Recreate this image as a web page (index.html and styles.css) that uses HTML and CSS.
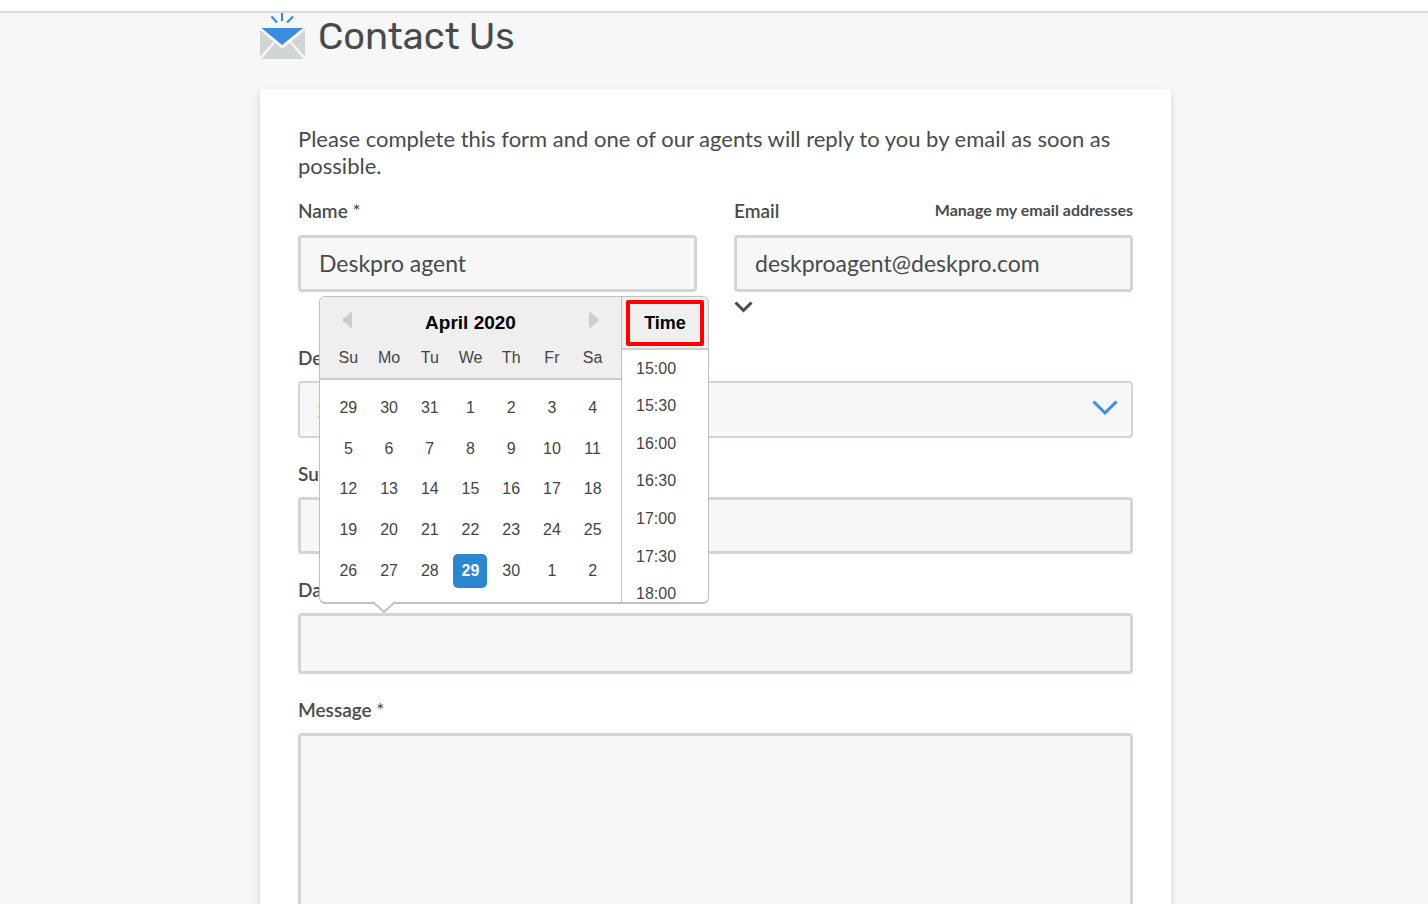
FILE: index.html
```html
<!DOCTYPE html>
<html lang="en">
<head>
<meta charset="utf-8">
<title>Contact Us</title>
<link rel="stylesheet" href="styles.css">
</head>
<body>
<div class="page">
  <div class="topbar"></div>
  <main class="container">
    <header class="heading">
      <svg class="heading-icon" width="45" height="46" viewBox="0 0 45 46" aria-hidden="true">
        <path d="M0 17L13.500 28.500L0 43.500ZM45 17L31.500 28.500L45 43.500ZM1.500 46L15 30L22 35.500L30 30L43.500 46Z" fill="#d1d5d5"/>
        <path d="M1.500 15H43L22 32Z" fill="#3a8dde"/>
        <path d="M22 0V8M11.500 3.500L17 9.500M33 3.500L27 9.500" fill="none" stroke="#3a8dde" stroke-width="2.200"/>
      </svg>
      <h1 class="title">Contact Us</h1>
    </header>
    <form class="card">
      <p class="intro">Please complete this form and one of our agents will reply to you by email as soon as possible.</p>
      <div class="row">
        <div class="field">
          <div class="label-row"><label class="label" for="name">Name <span class="star">*</span></label></div>
          <input class="input" id="name" type="text" value="Deskpro agent">
        </div>
        <div class="field">
          <div class="label-row">
            <label class="label" for="email">Email</label>
            <a class="manage" href="#">Manage my email addresses</a>
          </div>
          <input class="input" id="email" type="email" value="deskproagent@deskpro.com">
          <button class="more" type="button" aria-label="More email options">
            <svg width="19" height="12" viewBox="0 0 19 12"><path d="M1.500 1.500L9.500 9.500L17.500 1.500" fill="none" stroke="#484b4c" stroke-width="3"/></svg>
          </button>
        </div>
      </div>
      <div class="field department">
        <div class="label-row"><label class="label" for="department">Department <span class="star">*</span></label></div>
        <div class="control">
          <select class="input select" id="department"><option>Select</option></select>
          <svg class="select-arrow" width="26" height="16" viewBox="0 0 26 16" aria-hidden="true"><path d="M1.500 1.500L13 13L24.500 1.500" fill="none" stroke="#3a8dde" stroke-width="3"/></svg>
        </div>
      </div>
      <div class="field">
        <div class="label-row"><label class="label" for="subject">Subject <span class="star">*</span></label></div>
        <input class="input" id="subject" type="text">
      </div>
      <div class="field">
        <div class="label-row"><label class="label" for="date">Date</label></div>
        <div class="control">
          <input class="input date-input" id="date" type="text">
          <div class="picker">
            <div class="calendar">
              <div class="month">
                <button class="nav" type="button" aria-label="Previous month"><svg width="10" height="18" viewBox="0 0 10 18"><path d="M10 0V18L0 9Z" fill="#ccc"/></svg></button>
                <span>April 2020</span>
                <button class="nav" type="button" aria-label="Next month"><svg width="10" height="18" viewBox="0 0 10 18"><path d="M0 0V18L10 9Z" fill="#ccc"/></svg></button>
              </div>
              <table class="days">
                <thead><tr><th>Su</th><th>Mo</th><th>Tu</th><th>We</th><th>Th</th><th>Fr</th><th>Sa</th></tr></thead>
                <tbody>
                  <tr><td>29</td><td>30</td><td>31</td><td>1</td><td>2</td><td>3</td><td>4</td></tr>
                  <tr><td>5</td><td>6</td><td>7</td><td>8</td><td>9</td><td>10</td><td>11</td></tr>
                  <tr><td>12</td><td>13</td><td>14</td><td>15</td><td>16</td><td>17</td><td>18</td></tr>
                  <tr><td>19</td><td>20</td><td>21</td><td>22</td><td>23</td><td>24</td><td>25</td></tr>
                  <tr><td>26</td><td>27</td><td>28</td><td><button class="selected" type="button">29</button></td><td>30</td><td>1</td><td>2</td></tr>
                </tbody>
              </table>
            </div>
            <div class="times">
              <div class="times-head"><div class="times-title">Time</div></div>
              <ul class="times-list">
                <li>15:00</li><li>15:30</li><li>16:00</li><li>16:30</li><li>17:00</li><li>17:30</li><li>18:00</li>
              </ul>
            </div>
            <svg class="pointer" width="22" height="12" viewBox="0 0 22 12" aria-hidden="true"><path d="M0 0L11 10L22 0Z" fill="#fff"/><path d="M0 1L11 11L22 1" fill="none" stroke="#c0c2c2" stroke-width="2"/></svg>
          </div>
        </div>
      </div>
      <div class="field">
        <div class="label-row"><label class="label" for="message">Message <span class="star">*</span></label></div>
        <textarea class="input message" id="message" rows="10"></textarea>
      </div>
    </form>
  </main>
</div>
</body>
</html>
```
FILE: styles.css
```css
* { box-sizing: border-box; }

body {
  margin: 0;
  background: #f7f7f7;
  color: #484b4c;
  font-family: Lato, "Open Sans", sans-serif;
}

.page {
  height: 100vh;
  overflow: hidden;
}

.topbar {
  height: 13px;
  background: #fff;
  border-bottom: 2px solid #d9dbe0;
}

.container {
  max-width: 914px;
  margin: 0 auto;
  padding-left: 3px;
}

.heading {
  display: flex;
  align-items: flex-start;
  gap: 13px;
  height: 76px;
}

.title {
  margin: 0;
  font: 400 38px/46px Rubik, Roboto, sans-serif;
}

.card {
  padding: 36px 38px;
  background: #fff;
  box-shadow: 0 4px 8px rgba(0, 0, 0, 0.16);
}

.intro {
  margin: 0 0 20px;
  font-size: 22px;
  line-height: 27px;
}

.row {
  display: grid;
  grid-template-columns: 1fr 1fr;
  gap: 37px;
}

.field { margin-bottom: 24px; }
.row .field { margin-bottom: 0; }
.department { margin-top: 33px; }

.label-row {
  display: flex;
  justify-content: space-between;
  height: 35px;
  line-height: 24px;
}

.row .label-row { height: 36px; }

.label {
  font-size: 19px;
  font-weight: 600;
}

.star { font-weight: 400; }

.manage {
  color: inherit;
  font-size: 16px;
  font-weight: 700;
  line-height: 22px;
  text-decoration: none;
}

.input {
  display: block;
  width: 100%;
  height: 57px;
  padding: 0 18px 2px;
  border: 3px solid #d1d5d5;
  border-radius: 4px;
  background: #f7f7f7;
  color: inherit;
  font: 400 23px Lato, sans-serif;
  outline: none;
}

.control { position: relative; }

.select {
  appearance: none;
  border-width: 2px;
  padding: 0 17px;
  color: #e3c3a3;
}

.select-arrow {
  position: absolute;
  top: 19px;
  right: 15px;
  pointer-events: none;
}

.date-input { height: 61px; }

.message {
  height: 260px;
  resize: none;
}

.more {
  display: block;
  margin-top: 9px;
  padding: 0;
  border: 0;
  background: none;
  line-height: 0;
}

.picker {
  position: absolute;
  bottom: calc(100% + 9px);
  left: 21px;
  display: grid;
  grid-template-columns: 1fr 87px;
  width: 390px;
  height: 308px;
  border: 1px solid #bfc1c1;
  border-bottom-width: 2px;
  border-radius: 6px;
  background: #fff;
  color: #444;
  font: 16px/20px "Liberation Sans", Arial, sans-serif;
}

.calendar {
  overflow: hidden;
  border-radius: 5px 0 0 5px;
}

.month {
  display: flex;
  justify-content: space-between;
  height: 46px;
  padding: 14px 22px 0;
  background: #efefef;
  color: #000;
  font-size: 19px;
  font-weight: 700;
  line-height: 24px;
}

.nav {
  height: 18px;
  padding: 0;
  border: 0;
  background: none;
  line-height: 0;
}

.days, .days thead, .days tbody { display: block; }

.days tr {
  display: grid;
  grid-template-columns: repeat(7, 1fr);
}

.days th, .days td {
  padding: 0;
  font-weight: 400;
  text-align: center;
}

.days thead {
  height: 37px;
  padding: 5px 8px;
  border-bottom: 2px solid #ccc;
  background: #efefef;
}

.days tbody {
  display: grid;
  grid-template-rows: repeat(5, 1fr);
  height: 219px;
  padding: 8px;
}

.days tbody tr { align-items: center; }

.selected {
  width: 34px;
  height: 34px;
  padding: 0;
  border: 0;
  border-radius: 5px;
  background: #2a87d0;
  color: #fff;
  font: 700 16px "Liberation Sans", Arial, sans-serif;
}

.times {
  overflow: hidden;
  border-left: 1px solid #bfc1c1;
  border-radius: 0 5px 5px 0;
}

.times-head {
  height: 53px;
  padding: 3px 4px;
  border-bottom: 2px solid #ccc;
  background: #efefef;
}

.times-title {
  height: 46px;
  border: 4px solid #fe0000;
  border-radius: 2px;
  color: #000;
  font-size: 18px;
  font-weight: 700;
  line-height: 38px;
  text-align: center;
}

.times-list {
  display: grid;
  grid-template-rows: repeat(7, 1fr);
  align-items: center;
  height: 263px;
  margin: 0;
  padding: 0 0 0 14px;
  list-style: none;
}

.pointer {
  position: absolute;
  top: 304px;
  left: 53px;
}
```
